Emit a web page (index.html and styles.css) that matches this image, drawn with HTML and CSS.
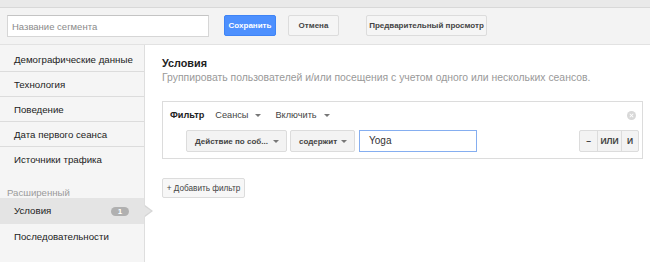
FILE: index.html
```html
<!doctype html>
<html lang="ru">
<head>
    <meta charset="UTF-8">
    <title>Сегмент</title>
    <link rel="stylesheet" href="styles.css">
</head>
<body>
    <div class="topstrip"></div>
    <div class="header">
        <input class="name-input" type="text" placeholder="Название сегмента">
        <button class="btn btn-blue">Сохранить</button>
        <button class="btn btn-cancel">Отмена</button>
        <button class="btn btn-preview">Предварительный просмотр</button>
    </div>
    <div class="layout">
        <div class="sidebar">
            <div class="nav-item">Демографические данные</div>
            <div class="nav-item">Технология</div>
            <div class="nav-item">Поведение</div>
            <div class="nav-item">Дата первого сеанса</div>
            <div class="nav-item last">Источники трафика</div>
            <div class="nav-label">Расширенный</div>
            <div class="nav-item adv selected">
                Условия
                <span class="badge">1</span>
                <span class="pointer"></span>
            </div>
            <div class="nav-item adv">Последовательности</div>
        </div>
        <div class="main">
            <div class="title">Условия</div>
            <div class="subtitle">Группировать пользователей и/или посещения с учетом одного или нескольких сеансов.</div>
            <div class="filter-box">
                <div class="filter-head">
                    <span class="filter-label">Фильтр</span>
                    <span class="drop">Сеансы <span class="caret"></span></span>
                    <span class="drop">Включить <span class="caret"></span></span>
                    <span class="close"></span>
                </div>
                <div class="filter-row">
                    <div class="select sel-wide">Действие по соб... <span class="caret"></span></div>
                    <div class="select sel-narrow">содержит <span class="caret"></span></div>
                    <div class="value-input">Yoga</div>
                    <div class="btn-group">
                        <span class="seg seg-minus">–</span>
                        <span class="seg seg-or">ИЛИ</span>
                        <span class="seg seg-and">И</span>
                    </div>
                </div>
            </div>
            <button class="btn add-btn">+ Добавить фильтр</button>
        </div>
    </div>
</body>
</html>
```

FILE: styles.css
```css
body {
    margin: 0;
    font-family: "Liberation Sans", Arial, sans-serif;
    color: #333;
    background: #fff;
    white-space: nowrap;
}
.topstrip {
    height: 7px;
    background: #e9e9e9;
    border-bottom: 1px solid #d8d8d8;
}
.header {
    height: 37px;
    background: #f3f3f3;
    border-bottom: 1px solid #e2e2e2;
    display: flex;
    align-items: flex-start;
    padding: 7px 0 0 7px;
    box-sizing: border-box;
}
.name-input {
    width: 202px;
    height: 22px;
    box-sizing: border-box;
    border: 1px solid #d6d6d6;
    border-top-color: #c4c4c4;
    padding: 0 4px;
    font-family: "Liberation Sans", Arial, sans-serif;
    font-size: 9.5px;
    color: #333;
    background: #fff;
    margin: 0;
}
.name-input::placeholder {
    color: #8a8a8a;
}
.btn {
    height: 21px;
    box-sizing: border-box;
    border: 1px solid #dcdcdc;
    border-radius: 2px;
    background: #f5f5f5;
    color: #444;
    font-family: "Liberation Sans", Arial, sans-serif;
    font-size: 8px;
    font-weight: bold;
    padding: 0;
    margin: 0;
    white-space: nowrap;
}
.btn-blue {
    margin-left: 15px;
    width: 52px;
    background: #4d90fe;
    border-color: #3f84f5;
    color: #fff;
}
.btn-cancel {
    margin-left: 12px;
    width: 51px;
}
.btn-preview {
    margin-left: 27px;
    width: 121px;
}
.layout {
    display: flex;
    height: 217px;
}
.sidebar {
    width: 144px;
    flex: none;
    background: #f5f5f5;
    border-right: 1px solid #dedede;
    padding-top: 2px;
    font-size: 9.7px;
    color: #222;
}
.nav-item {
    height: 24px;
    line-height: 25px;
    padding-left: 14px;
    border-bottom: 1px solid #dcdcdc;
    position: relative;
}
.nav-item.last {
    height: 25px;
    border-bottom: none;
}
.nav-item.adv {
    height: 26px;
    line-height: 26px;
    border-bottom: none;
}
.nav-label {
    height: 26px;
    box-sizing: border-box;
    padding: 15px 0 0 7px;
    line-height: 11px;
    color: #9a9a9a;
    font-size: 9.6px;
}
.selected {
    background: #e4e4e4;
}
.badge {
    position: absolute;
    left: 111px;
    top: 9px;
    width: 18px;
    height: 9px;
    border-radius: 5px;
    background: #b0b0b0;
    color: #fff;
    font-size: 8px;
    font-weight: bold;
    line-height: 9px;
    text-align: center;
}
.pointer {
    position: absolute;
    right: -9px;
    top: 7px;
    width: 0;
    height: 0;
    border-top: 6px solid transparent;
    border-bottom: 6px solid transparent;
    border-left: 8px solid #d6d6d6;
}
.pointer::after {
    content: "";
    position: absolute;
    left: -9px;
    top: -5px;
    border-top: 5px solid transparent;
    border-bottom: 5px solid transparent;
    border-left: 7px solid #e4e4e4;
}
.main {
    flex: 1;
    padding: 11px 7px 0 17px;
}
.title {
    font-size: 10.8px;
    font-weight: bold;
    line-height: 15px;
    color: #222;
}
.subtitle {
    font-size: 10.4px;
    line-height: 14px;
    color: #999;
}
.filter-box {
    margin-top: 16px;
    border: 1px solid #dcdcdc;
    padding: 5px 3px 6px 7px;
}
.filter-head {
    display: flex;
    align-items: center;
    height: 16px;
    font-size: 9.2px;
    color: #444;
}
.filter-label {
    font-weight: bold;
    color: #222;
}
.drop {
    margin-left: 11px;
    display: flex;
    align-items: center;
    margin-right: 3px;
}
.caret {
    display: inline-block;
    width: 0;
    height: 0;
    border-left: 3px solid transparent;
    border-right: 3px solid transparent;
    border-top: 3px solid #777;
    margin-left: 7px;
}
.close {
    margin-left: auto;
    margin-right: 3px;
    width: 9px;
    height: 9px;
    border-radius: 50%;
    background: #d8d8d8;
    position: relative;
}
.close::before,
.close::after {
    content: "";
    position: absolute;
    left: 4px;
    top: 2px;
    width: 1px;
    height: 5px;
    background: #fff;
    transform: rotate(45deg);
}
.close::after {
    transform: rotate(-45deg);
}
.filter-row {
    display: flex;
    margin-top: 7px;
    margin-left: 16px;
    height: 22px;
}
.select {
    box-sizing: border-box;
    height: 22px;
    border: 1px solid #dcdcdc;
    border-radius: 2px;
    background: #f3f3f3;
    font-size: 8px;
    font-weight: bold;
    color: #444;
    display: flex;
    align-items: center;
    padding-left: 8px;
}
.select .caret {
    margin-left: auto;
    margin-right: 7px;
}
.sel-wide {
    width: 101px;
}
.sel-narrow {
    width: 65px;
    margin-left: 3px;
}
.value-input {
    box-sizing: border-box;
    width: 118px;
    height: 22px;
    margin-left: 4px;
    border: 1px solid #85aef0;
    padding-left: 9px;
    font-size: 10px;
    line-height: 20px;
    color: #333;
}
.btn-group {
    margin-left: auto;
    display: flex;
    height: 22px;
    border: 1px solid #dcdcdc;
    border-radius: 2px;
    box-sizing: border-box;
    background: #f3f3f3;
}
.seg {
    font-size: 8.5px;
    font-weight: bold;
    color: #444;
    line-height: 20px;
    text-align: center;
}
.seg-minus {
    width: 17px;
}
.seg-or {
    width: 23px;
    border-left: 1px solid #dcdcdc;
    border-right: 1px solid #dcdcdc;
}
.seg-and {
    width: 16px;
}
.add-btn {
    display: block;
    margin-top: 19px;
    width: 83px;
    height: 20px;
    font-size: 8.2px;
    font-weight: normal;
    color: #444;
    background: #f7f7f7;
}
```
